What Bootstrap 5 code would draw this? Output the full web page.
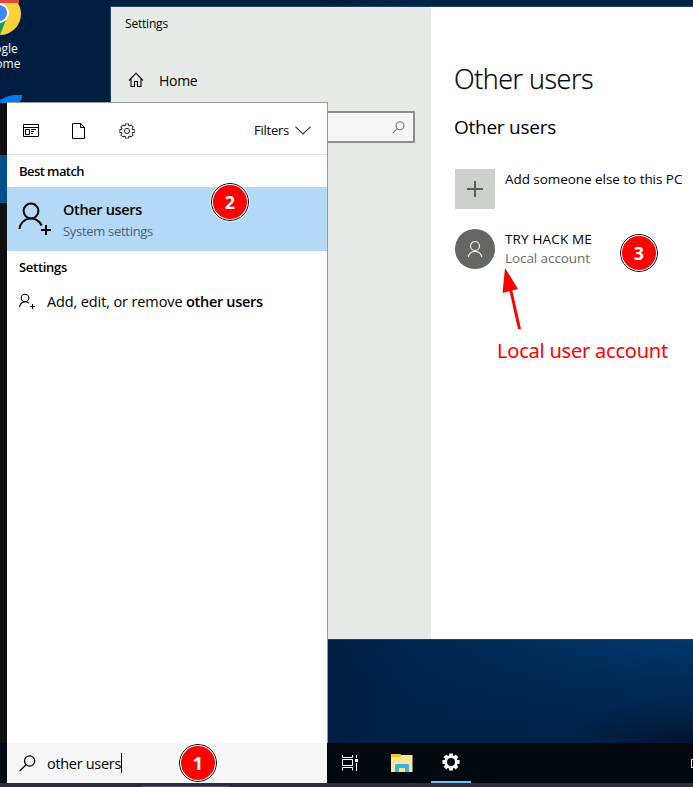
<!DOCTYPE html>
<html lang="en">
<head>
<meta charset="utf-8">
<meta name="viewport" content="width=device-width, initial-scale=1">
<title>Other users</title>
<link href="https://cdn.jsdelivr.net/npm/bootstrap@5.3.0/dist/css/bootstrap.min.css" rel="stylesheet">
<style>
body{font-family:"Open Sans","Noto Sans",sans-serif;color:#000;width:693px;height:787px;overflow:hidden}
.desktop{width:693px;height:787px;overflow:hidden;background:radial-gradient(ellipse 380px 110px at 693px 625px,#003a72 0,#002b58 50%,transparent 100%),radial-gradient(ellipse 120px 50px at 693px 743px,#00142e,transparent),linear-gradient(90deg,#001c40 0,#001c3e 45%,#002348 60%,#002348 100%)}
.t{white-space:nowrap;display:block}
svg{display:block;flex:none}
.chrome-ico{left:-21px;top:-8px}
.desk-label{left:-32px;top:41px;width:60px;font-size:12px;line-height:15px;color:#fff}
.dart{left:0;top:93px}
.edge{left:0;top:103px;width:7px;height:684px;background:linear-gradient(#101010 52px,#004f8b 52px,#004f8b 100px,#101010 100px,#101010 640px,#010b12 640px)}
.win{left:110px;top:6px;width:584px;height:634px;border:1px solid #24405a}
.side{width:320px;background:#e6ebe7;padding:8px 16px 0 14px}
.win-title{font-size:12px;line-height:18px;letter-spacing:-.19px}
.home{margin-top:29px;height:36px;padding-left:3px;gap:15px;font-size:14px;letter-spacing:-.3px}
.find{margin-top:13px;height:32px;width:300px;margin-left:-10px;border:2px solid #8c8f8c;background:#f7f7f7;padding-right:8px}
.pane{padding:51px 0 0 24px}
.page-title{font-size:27px;line-height:42px;font-weight:300;letter-spacing:-.49px;margin:0 0 13px -1px;-webkit-text-stroke:.25px #000}
.sect-title{font-size:19px;line-height:28px;font-weight:400;letter-spacing:-.25px;margin:0 0 28px -1px}
.person{gap:10px;margin-bottom:20px;font-size:13.5px;line-height:20px}
.name-add{letter-spacing:-.05px}
.name-local{letter-spacing:.16px}
.kind{letter-spacing:-.08px;line-height:19px;color:#6b6b6b}
.addbox{width:40px;height:40px;background:#ccd1cd}
.avatar{width:40px;height:40px;background:#636864}
.flyout{left:7px;top:102px;width:321px;height:641px;border:1px solid #979b98;border-left:0;border-bottom:0}
.tabs-row{height:52px;border-bottom:1px solid #e6e6e6;padding:4px 16px 0}
.filters{font-size:13px;letter-spacing:-.25px}
.group-head{font-size:13px;font-weight:600;line-height:33px;padding-left:12px;letter-spacing:-.29px}
.group-head.first{line-height:32px;letter-spacing:-.57px}
.best{height:64px;background:#b4d9f7;padding:2px 0 0 10px;gap:12px}
.best-name{font-size:14.5px;font-weight:600;line-height:22px;letter-spacing:-.34px}
.best-kind{font-size:13px;line-height:20px;letter-spacing:-.3px;color:#4e6170}
.result{height:35px;padding-left:12px;gap:12px;font-size:14.5px;letter-spacing:-.12px}
.result b{font-weight:600;letter-spacing:-.32px}
.searchbox{width:320px;height:40px;margin-left:7px;background:#f6f6f6;padding-left:12px}
.query{font-size:14.5px;letter-spacing:-.31px;margin-left:11px;padding-top:1px}
.taskbar{top:743px;height:40px;width:693px}
.tb-rest{background:#02090e;padding-left:15px}
.app-active{width:40px;border-bottom:2px solid #74bdf2}
.tray{width:2px;overflow:hidden}
.bottom{top:783px;height:4px;width:693px;background:#2c2d38}
.bottom i{margin-left:141px;width:88px;height:1px;margin-top:3px;background:#575b75}
.caret{width:1px;height:20px;background:#000}
.step{width:38px;height:38px;border:1px solid #000;padding:1px;background:#fff;outline:1px solid #ffffff90}
.step span{height:34px;background:#f00;color:#fff;font:700 18px/34px "Noto Sans",sans-serif}
.step-1{left:179px;top:744px}.step-2{left:211px;top:183px}.step-3{left:620px;top:234px}
.arrow{left:500px;top:265px}
.callout{left:497px;top:337px;color:#f00;font:20px/28px "Noto Sans",sans-serif;letter-spacing:-.22px}
</style>
</head>
<body>
<svg width="0" height="0" class="position-absolute"><defs><path id="teeth" d="M0-7.6V7.6M-7.6 0H7.6M-5.37-5.37L5.37 5.37M5.37-5.37L-5.37 5.37"/><path id="teeth-in" d="M0-6.8V6.8M-6.8 0H6.8M-4.8-4.8L4.8 4.8M4.8-4.8L-4.8 4.8"/></defs></svg>
<div class="desktop position-relative">
  <svg class="chrome-ico position-absolute" width="42" height="43" viewBox="0 0 42 43"><circle cx="21" cy="22" r="21" fill="#ffd13b"/><path d="M0 0h40v11H20z" fill="#de4a3c"/><path d="M20 31l7-3-6 15H8z" fill="#159c57"/><circle cx="20" cy="21" r="10" fill="#fff"/><circle cx="20" cy="21" r="8" fill="#4285f4"/></svg>
  <div class="desk-label position-absolute text-center"><span class="t">Google</span><span class="t">Chrome</span></div>
  <svg class="dart position-absolute" width="24" height="12" viewBox="0 0 24 12"><path d="M0 7Q10 1 22 2Q23 6 17 12H0z" fill="#0b79e8"/></svg>

  <main class="win position-absolute d-flex">
    <div class="side d-flex flex-column">
      <span class="t win-title">Settings</span>
      <div class="home d-flex align-items-center">
        <svg width="16" height="16" viewBox="0 0 16 16" fill="none" stroke="#000" stroke-width="1.1"><path d="M1 8.5L8 1.2l7 7.3M3 7v7.5h3.5V9.5h3v5H13V7"/></svg>
        <span class="t">Home</span>
      </div>
      <div class="find d-flex justify-content-end align-items-center"><svg width="13" height="13" viewBox="0 0 13 13" fill="none" stroke="#777" stroke-width="1.1"><circle cx="8" cy="4.8" r="4"/><path d="M5.2 7.6L.7 12.2"/></svg></div>
    </div>
    <div class="pane flex-grow-1 bg-white">
      <h1 class="t page-title">Other users</h1>
      <h2 class="t sect-title">Other users</h2>
      <div class="person d-flex">
        <div class="addbox d-flex align-items-center justify-content-center"><svg width="16" height="16" viewBox="0 0 16 16" stroke="#5b5f5c" stroke-width="2"><path d="M8 0v16M0 8h16"/></svg></div>
        <span class="t name-add">Add someone else to this PC</span>
      </div>
      <div class="person d-flex">
        <div class="avatar rounded-circle d-flex align-items-center justify-content-center"><svg width="16" height="18" viewBox="0 0 16 18" fill="none" stroke="#fff" stroke-width="1.1"><circle cx="8" cy="6" r="4.5"/><path d="M1.3 17a6.8 6.8 0 0 1 13.4 0"/></svg></div>
        <div><span class="t name-local">TRY HACK ME</span><span class="t kind">Local account</span></div>
      </div>
    </div>
  </main>

  <div class="edge position-absolute"></div>
  <section class="flyout position-absolute bg-white">
    <div class="tabs-row d-flex align-items-center">
      <svg width="16" height="13" viewBox="0 0 16 13" fill="none" stroke="#000"><path d="M.5.5h15v12H.5zM0 3.5h16"/><path d="M2.5 5.5h4v5h-4zM8 5.5h5M8 7.5h3M8 9.5h2"/></svg>
      <svg style="margin-left:33px" width="13" height="16" viewBox="0 0 13 16" fill="none" stroke="#000"><path d="M.5.5h8l4 4v11H.5zM8.5.5v4h4"/></svg>
      <svg style="margin-left:34px" width="16" height="16" viewBox="-8 -8 16 16"><use href="#teeth" stroke="#222" stroke-width="4"/><circle r="6.3" fill="#222"/><circle r="5.4" fill="#fff"/><use href="#teeth-in" stroke="#fff" stroke-width="2.2"/><circle r="2.6" fill="none" stroke="#222"/></svg>
      <span class="t ms-auto filters">Filters</span>
      <svg style="margin-left:6px" width="16" height="9" viewBox="0 0 16 9" fill="none" stroke="#333" stroke-width="1.1"><path d="M.4.6L8 8 15.6.6"/></svg>
    </div>
    <span class="t group-head first">Best match</span>
    <div class="best d-flex align-items-center">
      <svg width="34" height="36" viewBox="0 1 34 36" fill="none" stroke="#000" stroke-width="2"><circle cx="14" cy="10" r="7.4"/><path d="M2.4 28a11.6 11.6 0 0 1 22.2-3.5M29 24v10M24 29h10"/></svg>
      <div><span class="t best-name">Other users</span><span class="t best-kind">System settings</span></div>
    </div>
    <span class="t group-head">Settings</span>
    <div class="result d-flex align-items-center">
      <svg width="16" height="17" viewBox="0 0 16 17" fill="none" stroke="#000" stroke-width="1.1"><circle cx="6" cy="5" r="3.8"/><path d="M.6 14a5.6 5.6 0 0 1 9.5-3.6M13.5 11v5M11 13.5h5"/></svg>
      <span class="t">Add, edit, or remove <b>other users</b></span>
    </div>
  </section>

  <footer class="taskbar position-absolute d-flex">
    <div class="searchbox d-flex align-items-center flex-shrink-0">
      <svg width="17" height="17" viewBox="0 0 17 17" fill="none" stroke="#000" stroke-width="1.2"><circle cx="10.6" cy="6" r="5.1"/><path d="M7 9.7L.6 16"/></svg>
      <span class="t query">other users</span><i class="caret"></i>
    </div>
    <div class="tb-rest d-flex flex-grow-1 align-items-center">
      <svg width="17" height="16" viewBox="0 0 17 16" fill="none" stroke="#fff"><path d="M.5 0v2.5h10V0M.5 4.5h10v6H.5zM.5 15.500v-3h10v3M14.5 0v3M14.5 8v8"/><path d="M13 4h3v3h-3z" fill="#fff" stroke="none"/></svg>
      <svg style="margin-left:32px" width="22" height="18" viewBox="0 0 22 18"><path d="M0 0h9l1 1h11.500v17H0z" fill="#ffe694"/><path d="M0 0h9l1 1.500L9 3H0z" fill="#f9c31f"/><path d="M4 18v-7l1-1h12l1 1v7h-4v-4H8v4z" fill="#33b4e6"/></svg>
      <div class="app-active align-self-stretch d-flex align-items-center justify-content-center" style="margin-left:18px"><svg width="18" height="18" viewBox="-8 -8 16 16"><use href="#teeth" stroke="#fff" stroke-width="3.400"/><circle r="6" fill="#fff"/><circle r="3.500" fill="#02090e"/></svg></div>
      <div class="tray ms-auto"><svg width="10" height="9" viewBox="0 0 10 9" fill="none" stroke="#fff"><path d="M.5.500h9v8h-9z"/></svg></div>
    </div>
  </footer>
  <div class="bottom position-absolute d-flex"><i></i></div>

  <div class="step step-1 rounded-circle position-absolute"><span class="t rounded-circle text-center">1</span></div>
  <div class="step step-2 rounded-circle position-absolute"><span class="t rounded-circle text-center">2</span></div>
  <div class="step step-3 rounded-circle position-absolute"><span class="t rounded-circle text-center">3</span></div>
  <svg class="arrow position-absolute" width="24" height="66" viewBox="0 0 24 66"><path d="M5 3L18 24 2.500 28z" fill="#f00"/><path d="M10.500 24L19.500 64" stroke="#f00" stroke-width="3"/></svg>
  <span class="callout t position-absolute">Local user account</span>
</div>
<script src="https://cdn.jsdelivr.net/npm/bootstrap@5.3.0/dist/js/bootstrap.bundle.min.js"></script>
</body>
</html>
